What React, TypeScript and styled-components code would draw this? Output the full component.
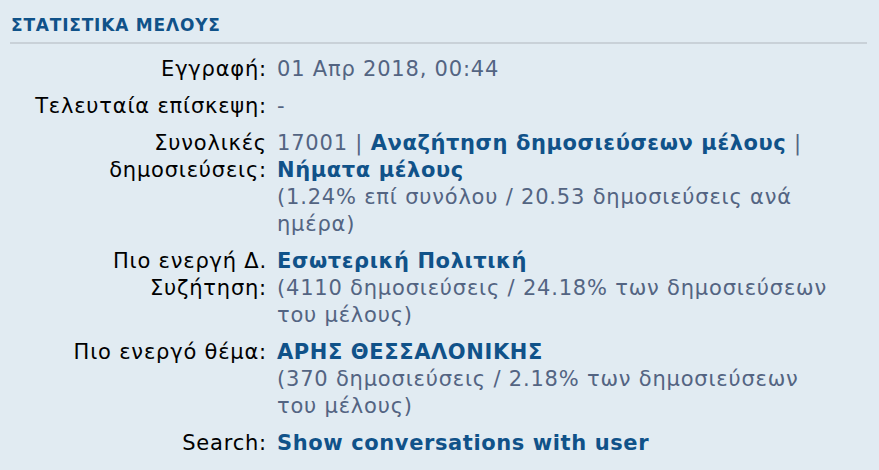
import styled, { createGlobalStyle } from 'styled-components';

const GlobalStyle = createGlobalStyle`
  html, body {
    margin: 0;
    padding: 0;
    background: #e1ebf2;
  }
  body {
    font-family: "DejaVu Sans", Verdana, sans-serif;
  }
`;

const Panel = styled.section`
  width: 879px;
  height: 470px;
  box-sizing: border-box;
  padding: 14px 12px 0 10px;
  background: #e1ebf2;
`;

const Heading = styled.h3`
  margin: 0;
  padding: 0 0 5px 1px;
  font-size: 17px;
  letter-spacing: 0.8px;
  font-weight: bold;
  color: #105289;
  text-transform: uppercase;
  border-bottom: 2px solid #c9d1d8;
  line-height: 23px;
`;

const Details = styled.dl`
  display: grid;
  grid-template-columns: 257px 562px;
  column-gap: 10px;
  row-gap: 10px;
  margin: 12px 0 0;
  font-size: 21px;
  letter-spacing: 0.8px;
  line-height: 27px;
`;

const Term = styled.dt`
  text-align: right;
  color: #000;
`;

const Value = styled.dd`
  margin: 0;
  color: #536482;
`;

const Link = styled.a`
  color: #105289;
  font-weight: bold;
  letter-spacing: 0.6px;
  text-decoration: none;
`;

export default function App() {
  return (
    <Panel>
      <GlobalStyle />
      <Heading>Στατιστικα μελους</Heading>
      <Details>
        <Term>Εγγραφή:</Term>
        <Value>01 Απρ 2018, 00:44</Value>

        <Term>Τελευταία επίσκεψη:</Term>
        <Value>-</Value>

        <Term>Συνολικές δημοσιεύσεις:</Term>
        <Value>
          17001 | <Link href="#">Αναζήτηση δημοσιεύσεων μέλους</Link> |{' '}
          <Link href="#">Νήματα μέλους</Link>
          <br />
          (1.24% επί συνόλου / 20.53 δημοσιεύσεις ανά ημέρα)
        </Value>

        <Term>Πιο ενεργή Δ. Συζήτηση:</Term>
        <Value>
          <Link href="#">Εσωτερική Πολιτική</Link>
          <br />
          (4110 δημοσιεύσεις / 24.18% των δημοσιεύσεων του μέλους)
        </Value>

        <Term>Πιο ενεργό θέμα:</Term>
        <Value>
          <Link href="#">ΑΡΗΣ ΘΕΣΣΑΛΟΝΙΚΗΣ</Link>
          <br />
          (370 δημοσιεύσεις / 2.18% των δημοσιεύσεων του μέλους)
        </Value>

        <Term>Search:</Term>
        <Value>
          <Link href="#">Show conversations with user</Link>
        </Value>
      </Details>
    </Panel>
  );
}
